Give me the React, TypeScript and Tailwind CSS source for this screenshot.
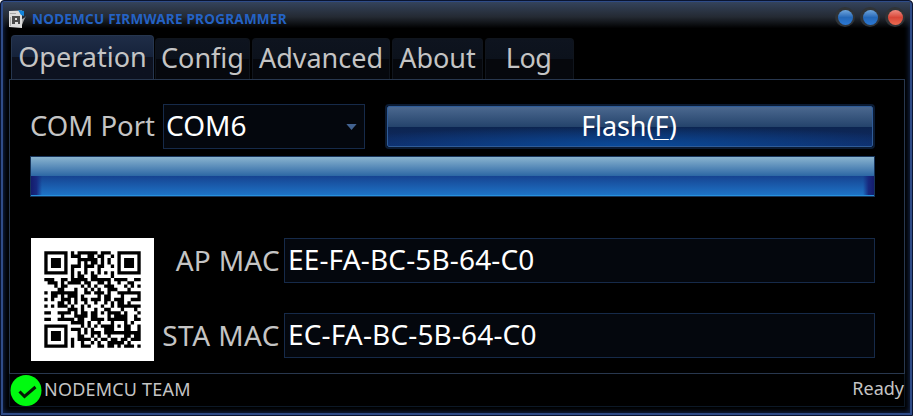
import React from "react";

const SIZE = 29;
const DATA_CODEWORDS = 55;
const EC_CODEWORDS = 15;

function gfMul(a: number, b: number): number {
  let z = 0;
  for (let i = 7; i >= 0; i--) {
    z = (z << 1) ^ ((z >>> 7) * 0x11d);
    z ^= ((b >>> i) & 1) * a;
  }
  return z;
}

function reedSolomon(data: number[], degree: number): number[] {
  const div = new Array(degree).fill(0);
  div[degree - 1] = 1;
  let root = 1;
  for (let i = 0; i < degree; i++) {
    for (let j = 0; j < degree; j++) {
      div[j] = gfMul(div[j], root);
      if (j + 1 < degree) div[j] ^= div[j + 1];
    }
    root = gfMul(root, 2);
  }
  const rem = new Array(degree).fill(0);
  for (const b of data) {
    const f = b ^ rem.shift();
    rem.push(0);
    div.forEach((c: number, i: number) => (rem[i] ^= gfMul(c, f)));
  }
  return rem;
}

function codewords(text: string): number[] {
  const bits: number[] = [];
  const push = (v: number, n: number) => {
    for (let i = n - 1; i >= 0; i--) bits.push((v >>> i) & 1);
  };
  push(4, 4);
  push(text.length, 8);
  for (const ch of text) push(ch.charCodeAt(0), 8);
  push(0, Math.min(4, DATA_CODEWORDS * 8 - bits.length));
  while (bits.length % 8) bits.push(0);
  for (let p = 0xec; bits.length < DATA_CODEWORDS * 8; p ^= 0xec ^ 0x11) push(p, 8);
  const data: number[] = [];
  for (let i = 0; i < bits.length; i += 8) data.push(parseInt(bits.slice(i, i + 8).join(""), 2));
  return data.concat(reedSolomon(data, EC_CODEWORDS));
}

// Version 3-L symbol with mask 1 (alternating rows).
function build(words: number[]): boolean[][] {
  const n = SIZE;
  const m: boolean[][] = Array.from({ length: n }, () => new Array(n).fill(false));
  const fixed: boolean[][] = Array.from({ length: n }, () => new Array(n).fill(false));
  const set = (x: number, y: number, v: boolean) => {
    if (x < 0 || y < 0 || x >= n || y >= n) return;
    m[y][x] = v;
    fixed[y][x] = true;
  };
  for (let i = 0; i < n; i++) {
    set(6, i, i % 2 === 0);
    set(i, 6, i % 2 === 0);
  }
  for (const [cx, cy] of [[3, 3], [n - 4, 3], [3, n - 4]]) {
    for (let dy = -4; dy <= 4; dy++)
      for (let dx = -4; dx <= 4; dx++) {
        const d = Math.max(Math.abs(dx), Math.abs(dy));
        set(cx + dx, cy + dy, d !== 2 && d !== 4);
      }
  }
  for (let dy = -2; dy <= 2; dy++)
    for (let dx = -2; dx <= 2; dx++) set(22 + dx, 22 + dy, Math.max(Math.abs(dx), Math.abs(dy)) !== 1);

  const bits = 0b111001011110011;
  const bit = (i: number) => ((bits >>> i) & 1) === 1;
  for (let i = 0; i <= 5; i++) set(8, i, bit(i));
  set(8, 7, bit(6));
  set(8, 8, bit(7));
  set(7, 8, bit(8));
  for (let i = 9; i < 15; i++) set(14 - i, 8, bit(i));
  for (let i = 0; i < 8; i++) set(n - 1 - i, 8, bit(i));
  for (let i = 8; i < 15; i++) set(8, n - 15 + i, bit(i));
  set(8, n - 8, true);

  let k = 0;
  for (let right = n - 1; right >= 1; right -= 2) {
    if (right === 6) right = 5;
    for (let v = 0; v < n; v++)
      for (let j = 0; j < 2; j++) {
        const x = right - j;
        const y = ((right + 1) & 2) === 0 ? n - 1 - v : v;
        if (fixed[y][x]) continue;
        const b = k < words.length * 8 ? ((words[k >>> 3] >>> (7 - (k & 7))) & 1) === 1 : false;
        k++;
        m[y][x] = b !== (y % 2 === 0);
      }
  }
  return m;
}

function qrPath(text: string): string {
  let d = "";
  build(codewords(text)).forEach((row, y) =>
    row.forEach((v, x) => (d += v ? `M${x + 4} ${y + 4}h1v1h-1z` : "")),
  );
  return d;
}

const AP = "EE-FA-BC-5B-64-C0";
const STA = "EC-FA-BC-5B-64-C0";
const QR = qrPath(`AP MAC:${AP}\nSTA MAC:${STA}`);

function Tab({ label, className }: { label: string; className: string }) {
  return (
    <div
      className={`h-[41px] shrink-0 rounded-t-[4px] border border-b-0 border-[#10151d] bg-linear-to-b from-[#0e141f] from-0% via-[#0c121c] via-50% to-[#06080d] to-50% text-center leading-[37px] ${className}`}
    >
      {label}
    </div>
  );
}

function Orb({ className }: { className: string }) {
  return (
    <div className="flex size-[20px] items-center justify-center rounded-full bg-[#2f3337]">
      <div className={`size-[15px] rounded-full bg-linear-to-b ${className}`} />
    </div>
  );
}

function Field({ value, className }: { value: string; className: string }) {
  return (
    <div className={`h-[45px] w-[591px] border border-[#162a49] bg-[#04070d] pl-[3px] text-[28px] leading-[41px] tracking-[0.15px] text-white ${className}`}>
      {value}
    </div>
  );
}

export default function App() {
  return (
    <div className="h-[416px] w-[913px] overflow-hidden rounded-t-[4px] border border-[#0a1430] bg-black font-['Noto_Sans',sans-serif] text-[27px] text-[#c4c4c4]">
      <div className="h-full rounded-t-[3px] border-2 border-t border-[#2f4c88] shadow-[inset_0_0_5px_1px_#14264c]">
        <div className="flex h-[33px] bg-linear-to-b from-[#34435c] from-0% via-[#242a33] via-45% to-transparent to-80% pl-[5px]">
          <svg className="mt-[7px] h-[20px] w-[20px]" viewBox="0 0 20 20">
            <path d="M1 2l13-.5V19L1 18z" fill="#dcdcdc" />
            <path d="M2 4h6v1H2zM2 8h1v9H2z" fill="#a8a8a8" />
            <path d="M10 1l6 1v5l-3-1z" fill="#1285dc" />
            <path d="M4 7h8v8h-2v-2H7v2H4z" fill="#4a4a4a" />
            <path d="M7 9h2v2H7z" fill="#ddd" />
            <path d="M14 10q2 0 4-3l-2 4-2 5z" fill="#aaa" />
          </svg>
          <div className="ml-[4px] grow pt-[6px] text-[13.5px] leading-[22px] font-bold tracking-[0.25px] text-[#2462c4]">
            NODEMCU FIRMWARE PROGRAMMER
          </div>
          <div className="mt-[5px] mr-[5px] flex gap-[5px]">
            <Orb className="from-[#6fa6dc] via-[#2468b8] to-[#2b78d4]" />
            <Orb className="from-[#6fa6dc] via-[#2468b8] to-[#2b78d4]" />
            <Orb className="from-[#ef8a80] via-[#d84638] to-[#ec6a50]" />
          </div>
        </div>

        <div className="flex h-[44px] items-end pl-[8px]">
          <div className="h-[44px] w-[143px] shrink-0 rounded-t-[4px] border border-b-0 border-[#26364f] bg-linear-to-b from-[#1f2d47] from-0% via-[#15223a] via-50% to-[#0d1220] to-50% text-center leading-[42px]">
            Operation
          </div>
          <Tab label="Config" className="ml-px w-[95px]" />
          <Tab label="Advanced" className="ml-[2px] w-[138px]" />
          <Tab label="About" className="ml-[2px] w-[91px]" />
          <Tab label="Log" className="ml-[2px] w-[89px] pr-[2px] tracking-[-0.6px]" />
        </div>

        <div className="ml-[6px] h-[295px] w-[896px] border border-[#28374e] pl-[20px]">
          <div className="flex pt-[24px]">
            <div className="w-[133px] text-[27.5px] leading-[44px]">COM Port</div>
            <div className="flex h-[45px] w-[202px] border border-[#162a49] bg-[#04070d] pl-[2px] text-[28px] leading-[40px] text-white">
              <span className="grow">COM6</span>
              <span className="flex w-[18px] items-center">
                <svg className="h-[6px] w-[11px]" viewBox="0 0 12 7">
                  <path d="M0 0h12L6 7z" fill="#426290" />
                </svg>
              </span>
            </div>
            <div className="ml-[20px] h-[45px] w-[490px] rounded-[4px] border-2 border-[#0b1b33] bg-black">
              <div className="flex h-[41px] items-center justify-center rounded-[2px] border border-[#2f5c98] bg-[radial-gradient(ellipse_65%_50%_at_50%_100%,#0a4b9a_0%,transparent_100%),linear-gradient(to_bottom,#4b688f_0%,#25446c_50%,#0c2550_50%,#102a65_100%)] pr-[2px] tracking-[-0.1px] text-white">
                <span>
                  Flash(<span className="underline decoration-1 underline-offset-[3px]">F</span>)
                </span>
              </div>
            </div>
          </div>
          <div className="mt-[7px] h-[41px] w-[845px] border border-[#17345a] bg-linear-to-b from-[#8ab4cf] from-0% via-[#2d68a5] via-48% to-[#16408e] to-48%">
            <div className="flex h-full flex-col justify-end">
              <div className="flex h-[20px] justify-between border-b border-[#2691dc] bg-linear-to-b from-[#164391] to-[#1e73c6]">
                <div className="w-[11px] bg-linear-to-r from-[#141c6c] via-[#17297f] to-transparent" />
                <div className="w-[11px] bg-linear-to-l from-[#141c6c] via-[#17297f] to-transparent" />
              </div>
            </div>
          </div>
          <div className="mt-[41px] flex">
            <svg className="ml-px h-[123px] w-[123px] shrink-0 bg-[#fff]" viewBox="0 0 37 37">
              <path d={QR} fill="#000" />
            </svg>
            <div className="w-[130px] pr-[4px] text-right text-[28px] leading-[45px] tracking-[0.3px]">
              <div>AP MAC</div>
              <div className="mt-[30px] tracking-[0.45px] whitespace-nowrap">STA MAC</div>
            </div>
            <div>
              <Field value={AP} className="" />
              <Field value={STA} className="mt-[30px]" />
            </div>
          </div>
        </div>

        <div className="ml-[6px] flex h-[33px] w-[896px] justify-between border border-t-0 border-[#0c1826] text-[18px] leading-[30px]">
          <div className="flex">
            <svg className="mt-px h-[31px] w-[33px]" viewBox="0 0 33 31">
              <circle cx="16" cy="15.5" r="15.5" fill="#00fa10" />
              <path d="M9.5 16.5l5 5L25.5 12" fill="none" stroke="#061a06" strokeWidth="3" />
            </svg>
            <span className="ml-px tracking-[0.2px]">NODEMCU TEAM</span>
          </div>
          <span className="leading-[29px]">Ready</span>
        </div>
      </div>
    </div>
  );
}
